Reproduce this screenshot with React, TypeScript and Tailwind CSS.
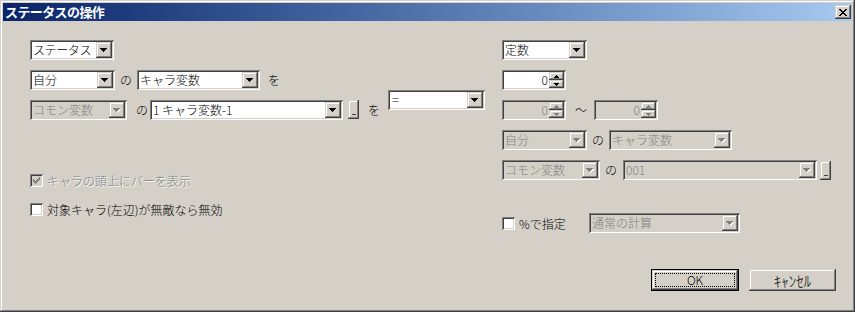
import React from "react";

const sunken =
  "shadow-[inset_1px_1px_0_#808080,inset_-1px_-1px_0_#ffffff,inset_2px_2px_0_#404040,inset_-2px_-2px_0_#d4d0c8]";
const raised =
  "shadow-[inset_-1px_-1px_0_#404040,inset_1px_1px_0_#d4d0c8,inset_-2px_-2px_0_#808080,inset_2px_2px_0_#ffffff]";

function Arrow({ disabled, up }: { disabled?: boolean; up?: boolean }) {
  const c = disabled ? "#808080" : "#000000";
  const rows = up ? [3, 2, 1, 0] : [0, 1, 2, 3];
  return (
    <svg width="8" height="5" viewBox="0 0 8 5" shapeRendering="crispEdges">
      {disabled &&
        rows.map((r, i) => (
          <rect key={"s" + i} x={r + 1} y={i + 1} width={7 - 2 * r} height={1} fill="#ffffff" />
        ))}
      {rows.map((r, i) => (
        <rect key={i} x={r} y={i} width={7 - 2 * r} height={1} fill={c} />
      ))}
    </svg>
  );
}

function DropBtn({ disabled }: { disabled?: boolean }) {
  return (
    <div className={`flex h-[16px] w-[16px] shrink-0 items-center justify-center bg-[#d4d0c8] ${raised}`}>
      <Arrow disabled={disabled} />
    </div>
  );
}

function Combo({ w, text, disabled, tcls }: { w: string; text: string; disabled?: boolean; tcls?: string }) {
  return (
    <div
      className={`flex h-[20px] shrink-0 items-center p-[2px] ${sunken} ${w} ${
        disabled ? "bg-[#d4d0c8] text-[#808080]" : "bg-white text-black"
      }`}
    >
      <span className={`flex-1 whitespace-nowrap pl-[1px] leading-[16px] ${tcls ?? "text-[12px]"}`}>
        {text}
      </span>
      <DropBtn disabled={disabled} />
    </div>
  );
}

function SpinHalf({ up, disabled }: { up?: boolean; disabled?: boolean }) {
  return (
    <div className={`flex h-[8px] w-[15px] items-center justify-center bg-[#d4d0c8] ${raised}`}>
      <svg width="5" height="3" viewBox="0 0 5 3" shapeRendering="crispEdges">
        {(up ? [2, 1, 0] : [0, 1, 2]).map((r, i) => (
          <rect key={i} x={r} y={i} width={5 - 2 * r} height={1} fill={disabled ? "#808080" : "#000"} />
        ))}
      </svg>
    </div>
  );
}

function Spin({ disabled }: { disabled?: boolean }) {
  return (
    <div
      className={`flex h-[20px] w-[64px] shrink-0 items-center p-[2px] ${sunken} ${
        disabled ? "bg-[#d4d0c8] text-[#808080]" : "bg-white text-black"
      }`}
    >
      <span className="flex-1 pr-[1px] text-right text-[12px] leading-[16px]">0</span>
      <div className="flex h-[16px] flex-col">
        <SpinHalf up disabled={disabled} />
        <SpinHalf disabled={disabled} />
      </div>
    </div>
  );
}

function Check({ checked, disabled }: { checked?: boolean; disabled?: boolean }) {
  return (
    <div
      className={`flex h-[13px] w-[13px] shrink-0 items-center justify-center ${sunken} ${
        disabled ? "bg-[#d4d0c8]" : "bg-white"
      }`}
    >
      {checked && (
        <svg width="7" height="7" viewBox="0 0 7 7" shapeRendering="crispEdges">
          {[
            [0, 2],
            [1, 3],
            [2, 4],
            [3, 3],
            [4, 2],
            [5, 1],
            [6, 0],
          ].map(([x, y], i) => (
            <rect key={i} x={x} y={y} width={1} height={3} fill={disabled ? "#808080" : "#000"} />
          ))}
        </svg>
      )}
    </div>
  );
}

function SmallBtn() {
  return (
    <div className={`flex h-[19px] w-[11px] shrink-0 items-end justify-center bg-[#d4d0c8] pb-[4px] ${raised}`}>
      <div className="h-[1px] w-[4px] bg-[#404040]" />
    </div>
  );
}

function Lbl({ t, cls }: { t: string; cls?: string }) {
  return <span className={`w-[12px] shrink-0 text-center text-[12px] leading-[20px] ${cls ?? ""}`}>{t}</span>;
}

export default function App() {
  return (
    <div className="h-[312px] w-[855px] overflow-hidden bg-[#d4d0c8] font-['Noto_Sans_CJK_JP','Noto_Sans',sans-serif] font-light text-black">
      <div className={`flex h-[312px] w-[855px] flex-col p-[3px] ${raised}`}>
        {/* title bar */}
        <div className="flex h-[18px] items-center bg-gradient-to-r from-[#0a246a] to-[#a6caf0] pl-[2px] pr-[1px]">
          <span className="flex-1 text-[13px] font-bold leading-[18px] tracking-[-0.6px] text-white">
            ステータスの操作
          </span>
          <div className={`flex h-[14px] w-[16px] items-center justify-center bg-[#d4d0c8] ${raised}`}>
            <svg width="8" height="7" viewBox="0 0 8 7" shapeRendering="crispEdges">
              {[0, 1, 2, 3, 4, 5, 6].map((i) => (
                <React.Fragment key={i}>
                  <rect x={i} y={i} width={2} height={1} fill="#000" />
                  <rect x={6 - i} y={i} width={2} height={1} fill="#000" />
                </React.Fragment>
              ))}
            </svg>
          </div>
        </div>

        {/* client */}
        <div className="flex flex-1 pl-[27px]">
          {/* left column */}
          <div className="flex w-[472px] shrink-0 flex-col pt-[19px]">
            <div className="flex h-[20px]">
              <Combo w="w-[84px]" text="ステータス" tcls="text-[12px] tracking-[-0.4px]" />
            </div>
            <div className="mt-[10px] flex h-[20px] items-center">
              <Combo w="w-[85px]" text="自分" />
              <Lbl t="の" cls="ml-[5px]" />
              <div className="ml-[5px]">
                <Combo w="w-[123px]" text="キャラ変数" />
              </div>
              <Lbl t="を" cls="ml-[8px]" />
            </div>
            <div className="flex h-[30px] items-end">
              <Combo w="w-[97px]" text="コモン変数" disabled />
              <Lbl t="の" cls="ml-[9px]" />
              <div className="ml-[2px]">
                <Combo w="w-[193px]" text="1 キャラ変数-1" />
              </div>
              <div className="mb-[1px] ml-[5px]">
                <SmallBtn />
              </div>
              <Lbl t="を" cls="ml-[9px]" />
              <div className="mb-[10px] ml-[8px]">
                <Combo w="w-[97px]" text="=" tcls="text-[13px] pl-[2px]" />
              </div>
            </div>
            <div className="mt-[54px] flex h-[13px] items-center">
              <Check checked disabled />
              <span className="ml-[4px] text-[12px] leading-[13px] text-[#808080] [text-shadow:1px_1px_0_#ffffff]">
                キャラの頭上にバーを表示
              </span>
            </div>
            <div className="mt-[16px] flex h-[13px] items-center">
              <Check />
              <span className="ml-[4px] text-[12px] leading-[13px]">対象キャラ(左辺)が無敵なら無効</span>
            </div>
          </div>

          {/* right column */}
          <div className="flex flex-1 flex-col pt-[19px]">
            <div className="flex h-[20px]">
              <Combo w="w-[85px]" text="定数" />
            </div>
            <div className="mt-[10px] flex h-[20px]">
              <Spin />
            </div>
            <div className="mt-[10px] flex h-[20px] items-center">
              <Spin disabled />
              <Lbl t="～" cls="ml-[9px]" />
              <div className="ml-[7px]">
                <Spin disabled />
              </div>
            </div>
            <div className="mt-[10px] flex h-[20px] items-center">
              <Combo w="w-[85px]" text="自分" disabled />
              <Lbl t="の" cls="ml-[5px]" />
              <div className="ml-[5px]">
                <Combo w="w-[123px]" text="キャラ変数" disabled />
              </div>
            </div>
            <div className="mt-[10px] flex h-[20px] items-center">
              <Combo w="w-[98px]" text="コモン変数" disabled />
              <Lbl t="の" cls="ml-[5px]" />
              <div className="ml-[6px]">
                <Combo w="w-[194px]" text="001" disabled />
              </div>
              <div className="ml-[3px]">
                <SmallBtn />
              </div>
            </div>
            <div className="mt-[33px] flex h-[20px] items-center">
              <Check />
              <span className="ml-[4px] w-[70px] shrink-0 text-[12px] leading-[13px]">%で指定</span>
              <Combo w="w-[151px]" text="通常の計算" disabled />
            </div>
            <div className="ml-[149px] mt-[36px] flex">
              <div className="h-[22px] w-[88px] border border-black">
                <div className={`flex h-full w-full items-center justify-center bg-[#d4d0c8] p-[3px] ${raised}`}>
                  <div className="flex h-full w-full items-center justify-center border border-dotted border-black text-[12px] leading-none">
                    OK
                  </div>
                </div>
              </div>
              <div
                className={`ml-[10px] flex h-[22px] w-[87px] items-center justify-center bg-[#d4d0c8] text-[15px] leading-none ${raised}`}
              >
                ｷｬﾝｾﾙ
              </div>
            </div>
          </div>
        </div>
      </div>
    </div>
  );
}
